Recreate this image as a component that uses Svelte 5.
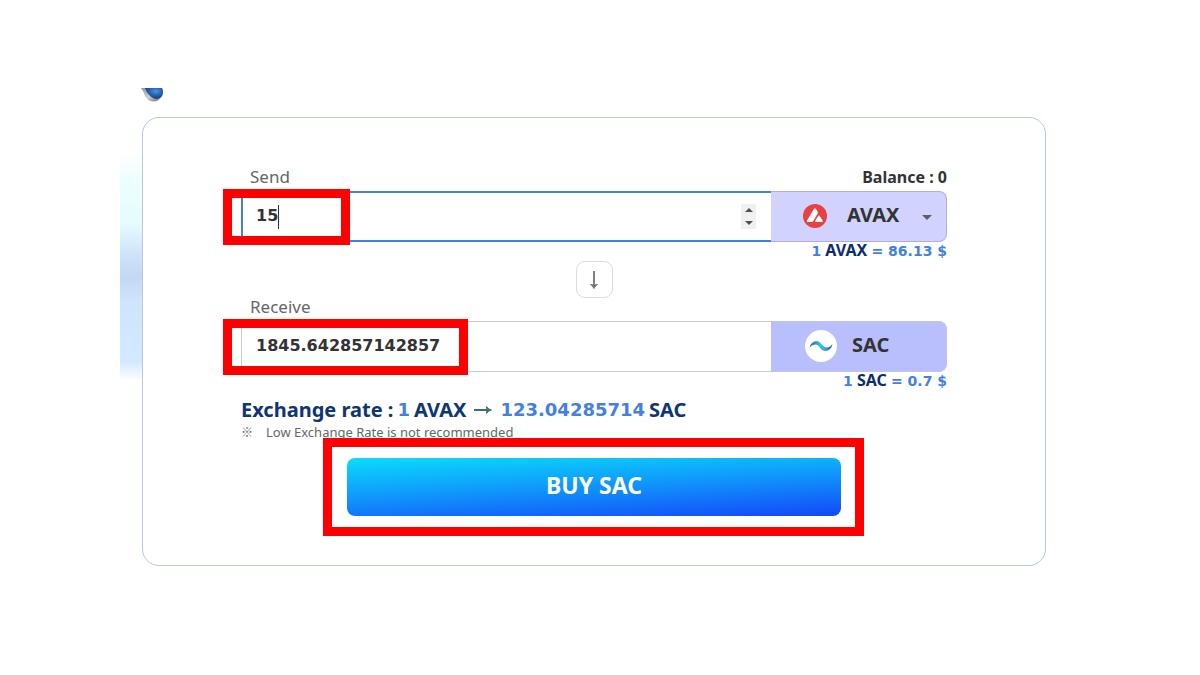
<script>
  let send = $state(15);
  let receive = $state('1845.642857142857');
  let token = $state('AVAX');
</script>

<div class="page">
  <header>
    <svg class="logo" width="24" height="17" viewBox="0 0 24 17" aria-hidden="true">
      <defs>
        <radialGradient id="gem" cx=".6" cy=".3" r=".7">
          <stop offset="0" stop-color="#4f94d8" />
          <stop offset=".45" stop-color="#2a67b5" />
          <stop offset="1" stop-color="#143a78" />
        </radialGradient>
        <linearGradient id="rim" x1="0" y1="0" x2="1" y2="1">
          <stop offset="0" stop-color="#8f959c" />
          <stop offset=".5" stop-color="#d0d0cd" />
          <stop offset="1" stop-color="#59636e" />
        </linearGradient>
      </defs>
      <path d="M1 2H22Q24 6 22 10Q19 15.500 13 15.500Q8 15 5 10Q4 6 1 2Z" fill="url(#rim)" />
      <path d="M5 2H22Q24 6 22 10Q19 14 14 12.500Q7 9 5 2Z" fill="url(#gem)" />
    </svg>
  </header>

  <div class="body">
    <div class="glow"></div>
    <main class="card">
      <div class="labels">
        <label for="send">Send</label>
        <span class="balance">Balance : 0</span>
      </div>
      <div class="field">
        <div class="amount active">
          <input id="send" type="number" bind:value={send} />
          <span class="caret"></span>
          <div class="steps">
            <button aria-label="Increase" onclick={() => (send += 1)}>
              <svg width="8" height="4" viewBox="0 0 8 4"><path d="M0 4L4 0L8 4Z" fill="#505050" /></svg>
            </button>
            <button aria-label="Decrease" onclick={() => (send -= 1)}>
              <svg width="8" height="4" viewBox="0 0 8 4"><path d="M0 0H8L4 4Z" fill="#505050" /></svg>
            </button>
          </div>
        </div>
        <div class="token">
          <svg class="coin" width="24" height="24" viewBox="0 0 24 24" aria-hidden="true">
            <circle cx="12" cy="12" r="12" fill="#e84142" />
            <path d="M11 5Q12 3.500 13 5L14.500 7.600Q15 8.700 14.500 9.800L10.300 17Q9.700 18 8.500 18H5Q3.200 18 4 16.500Z" fill="#fff" />
            <path d="M15.200 12Q16 10.800 16.800 12L19.700 16.700Q20.300 18 19 18H13Q11.600 18 12.300 16.700Z" fill="#fff" />
          </svg>
          <select aria-label="Token" bind:value={token}>
            <option>AVAX</option>
          </select>
          <svg class="chevron" width="10" height="5" viewBox="0 0 10 5" aria-hidden="true"><path d="M0 0H10L5 5Z" fill="#5c5c72" /></svg>
        </div>
        <span class="mark short"></span>
      </div>
      <p class="price"><b class="num">1</b> <b class="unit">AVAX</b> <b class="num">= 86.13 $</b></p>

      <button class="swap" aria-label="Swap direction">
        <svg width="12" height="20" viewBox="0 0 12 20" aria-hidden="true">
          <path d="M6 1V17" stroke="#808080" stroke-width="2" />
          <path d="M2.500 14.500Q4.500 15.500 6 18.500Q7.500 15.500 9.500 14.500Q6 15.500 2.500 14.500Z" fill="#777" stroke="#777" />
        </svg>
      </button>

      <div class="labels">
        <label for="receive">Receive</label>
      </div>
      <div class="field">
        <div class="amount">
          <input id="receive" type="text" bind:value={receive} />
        </div>
        <div class="token fixed">
          <svg class="coin" width="32" height="32" viewBox="0 0 32 32" aria-hidden="true">
            <defs>
              <linearGradient id="wave" x1="0" x2="1">
                <stop offset="0" stop-color="#3a55b8" />
                <stop offset=".45" stop-color="#2cc6e0" />
                <stop offset=".6" stop-color="#35b5dc" />
                <stop offset="1" stop-color="#3f48b0" />
              </linearGradient>
            </defs>
            <circle cx="16" cy="16" r="16" fill="#fff" />
            <path d="M4.500 17.500Q6.500 11 11.500 11C16 11 17.500 17.500 21.500 17.500Q25 17.500 27.500 14Q26 21 20.500 21C15 21 14.500 14.500 10.500 14.500Q7 14.500 4.500 17.500Z" fill="url(#wave)" />
          </svg>
          <span class="name">SAC</span>
        </div>
        <span class="mark long"></span>
      </div>
      <p class="price"><b class="num">1</b> <b class="unit">SAC</b> <b class="num">= 0.7 $</b></p>

      <p class="rate">
        <span>Exchange rate :</span>
        <b class="num">1</b>
        <span>AVAX</span>
        <svg width="18" height="10" viewBox="0 0 18 10" aria-hidden="true">
          <path d="M0 5H15" stroke="#3f6f68" stroke-width="2" />
          <path d="M12.500 1.500Q13.500 4 17.500 5Q13.500 6 12.500 8.500Q13.500 5 12.500 1.500Z" fill="#3f6f68" stroke="#3f6f68" />
        </svg>
        <b class="num">123.04285714</b>
        <span>SAC</span>
      </p>
      <p class="note"><span class="sign">※</span>Low Exchange Rate is not recommended</p>

      <div class="action">
        <button class="buy">BUY SAC</button>
      </div>
    </main>
  </div>
</div>

<style>
  :global(body) {
    margin: 0;
    background: #fff;
  }
  .page {
    --latin: "Noto Sans", "Open Sans", "Noto Sans CJK JP", sans-serif;
    --digits: "DejaVu Sans", Verdana, sans-serif;
    font-family: var(--latin);
    color: #333;
    padding: 86px 154px 32px 120px;
  }
  .page * {
    box-sizing: border-box;
  }
  header {
    height: 31px;
    padding-left: 20px;
  }
  .logo {
    display: block;
  }
  .body {
    display: flex;
  }
  .glow {
    flex: 0 0 22px;
    height: 360px;
    background: linear-gradient(#fff 36px, #eefeff 60px, #e6fcff 105px, #cfe2fa 138px, #c5d7f2 160px, #cfe5fb 185px, #d3e9ff 245px, #fff 264px);
  }
  .card {
    flex: 1;
    min-width: 0;
    border: 1px solid #b7c7ec;
    border-radius: 17px;
    background: #fff;
    padding: 46px 98px 49px;
  }
  .labels {
    display: flex;
    justify-content: space-between;
    align-items: center;
    height: 27px;
    padding: 0 0 2px 9px;
  }
  label {
    font-size: 17px;
    color: #666;
  }
  .balance {
    font-size: 16px;
    font-weight: 700;
  }
  .field {
    position: relative;
    display: flex;
    height: 51px;
  }
  .amount {
    position: relative;
    flex: 1;
    display: flex;
    align-items: center;
    border: 1px solid #ccc;
    border-right: 0;
  }
  .amount.active {
    border: 2px solid #4182d2;
    border-right: 0;
    padding-right: 15px;
  }
  .amount input {
    flex: 1;
    align-self: stretch;
    min-width: 0;
    border: 0;
    outline: 0;
    background: none;
    padding: 0 15px 2px 14px;
    font: 700 16px var(--digits);
    color: #333;
  }
  .amount.active input {
    padding-left: 13px;
    appearance: textfield;
  }
  input::-webkit-inner-spin-button {
    appearance: none;
  }
  .steps {
    display: flex;
    flex-direction: column;
    width: 15px;
    height: 25px;
  }
  .steps button {
    flex: 1;
    display: flex;
    align-items: center;
    justify-content: center;
    border: 0;
    padding: 0;
    background: #f0f0f0;
  }
  .caret {
    position: absolute;
    left: 35px;
    top: 12px;
    width: 1px;
    height: 24px;
    background: #333;
  }
  .token {
    flex: 0 0 176px;
    display: flex;
    align-items: center;
    position: relative;
    padding: 0 0 1px 32px;
    border: 1px solid #aeb0cc;
    border-left: 0;
    border-radius: 0 8px 8px 0;
    background: #d1d3fe;
    font-size: 20px;
    font-weight: 700;
  }
  .token.fixed {
    background: #b9bffc;
    border-color: #c0c4ec;
    padding-left: 34px;
    gap: 15px;
  }
  .coin {
    flex: none;
  }
  select {
    flex: 1;
    align-self: stretch;
    appearance: none;
    border: 0;
    background: none;
    padding: 0 0 3px 20px;
    font: inherit;
    color: inherit;
  }
  .name {
    padding-bottom: 3px;
  }
  .chevron {
    position: absolute;
    right: 14px;
    top: 23px;
    pointer-events: none;
  }
  .mark,
  .action::before {
    position: absolute;
    border: 9px solid #fe0000;
    pointer-events: none;
  }
  .mark {
    top: -2px;
    left: -18px;
    height: 56px;
  }
  .short {
    width: 127px;
  }
  .long {
    width: 245px;
  }
  p {
    margin: 0;
  }
  .price {
    height: 19px;
    line-height: 16px;
    font-size: 16px;
    text-align: right;
    color: #0a2f6e;
  }
  .num {
    font-family: var(--digits);
    color: #437fe4;
  }
  .price .num {
    font-size: 14px;
  }
  .swap {
    display: flex;
    align-items: center;
    justify-content: center;
    width: 37px;
    height: 37px;
    margin: 0 auto -4px;
    padding: 0;
    border: 1px solid #dcdcdc;
    border-radius: 9px;
    background: #fff;
  }
  .rate {
    display: flex;
    align-items: center;
    gap: 4px;
    height: 36px;
    font-size: 20px;
    font-weight: 700;
    color: #0f3575;
    white-space: nowrap;
  }
  .rate .num {
    font-size: 18px;
  }
  .rate svg {
    margin: 2px 4px 0;
  }
  .note {
    display: flex;
    height: 10px;
    line-height: 10px;
    font-size: 13px;
    color: #666;
    white-space: nowrap;
  }
  .sign {
    width: 25px;
    font-family: "Noto Sans CJK JP", sans-serif;
    font-size: 12px;
  }
  .action {
    position: relative;
    width: 70%;
    margin: 21px auto 0;
  }
  .action::before {
    content: "";
    inset: -20px -23px -20px -24px;
  }
  .buy {
    display: block;
    width: 100%;
    height: 58px;
    border: 0;
    border-radius: 8px;
    background: linear-gradient(177deg, #0adcfb, #0f9cfb 45%, #1448f8);
    padding: 0 0 4px;
    font: 700 23px var(--latin);
    color: #fff;
  }
</style>
